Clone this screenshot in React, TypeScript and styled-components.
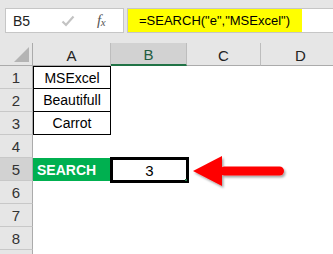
import { Fragment, FunctionComponent } from "react";
import styled, { createGlobalStyle } from "styled-components";

const GlobalStyle = createGlobalStyle`
  html, body {
    margin: 0;
    padding: 0;
    background: #ffffff;
  }
  body {
    font-family: "Liberation Sans", Arial, sans-serif;
  }
`;

const Sheet = styled.div`
  width: 333px;
  height: 254px;
  overflow: hidden;
  background: #ffffff;
  display: flex;
  flex-direction: column;
`;

const FormulaBar = styled.div`
  height: 43px;
  box-sizing: border-box;
  padding: 8px 0 10px 5px;
  background: #e6e6e6;
  display: flex;
  flex-direction: row;
  gap: 3px;
`;

const NameBox = styled.div`
  width: 119px;
  height: 25px;
  box-sizing: border-box;
  border: 1px solid #c6c6c6;
  background: #ffffff;
  display: flex;
  align-items: center;
  padding-left: 7px;
`;

const CellRef = styled.span`
  width: 48px;
  font-size: 14px;
  color: #222222;
`;

const CheckIcon = styled.svg`
  width: 14px;
  height: 12px;
`;

const FxLabel = styled.span`
  margin-left: 22px;
  font-family: "Liberation Serif", "Times New Roman", serif;
  font-style: italic;
  font-size: 15px;
  color: #555555;
  letter-spacing: -0.5px;

  & sub {
    font-size: 11px;
    vertical-align: -1px;
  }
`;

const FormulaInput = styled.div`
  flex: 1;
  height: 25px;
  box-sizing: border-box;
  border: 1px solid #c6c6c6;
  border-right: none;
  background: #ffffff;
  display: flex;
`;

const FormulaText = styled.div`
  width: 174px;
  height: 100%;
  background: #ffff00;
  box-sizing: border-box;
  padding-left: 11px;
  display: flex;
  align-items: center;
  font-size: 13px;
  color: #000000;
  white-space: nowrap;
`;

const Grid = styled.div`
  position: relative;
  display: grid;
  grid-template-columns: 33px 78px 76px 74px 80px;
  grid-auto-rows: 23px;
`;

const Corner = styled.div`
  background: #e6e6e6;
  border-right: 1px solid #ababab;
  border-bottom: 1px solid #ababab;
  box-sizing: border-box;
  position: relative;

  &::after {
    content: "";
    position: absolute;
    right: 3px;
    bottom: 3px;
    width: 0;
    height: 0;
    border-left: 15px solid transparent;
    border-bottom: 15px solid #b4b4b4;
  }
`;

const ColHeader = styled.div<{ $active?: boolean }>`
  background: ${(p) => (p.$active ? "#d2d2d2" : "#e6e6e6")};
  border-right: 1px solid #bdbdbd;
  border-bottom: ${(p) => (p.$active ? "2px solid #217346" : "1px solid #ababab")};
  box-sizing: border-box;
  display: flex;
  align-items: center;
  justify-content: center;
  padding-top: 2px;
  font-size: 15px;
  color: ${(p) => (p.$active ? "#1f5c40" : "#222222")};
`;

const RowHeader = styled.div<{ $active?: boolean }>`
  background: ${(p) => (p.$active ? "#d2d2d2" : "#e6e6e6")};
  border-right: 1px solid #ababab;
  border-bottom: 1px solid #c8c8c8;
  box-sizing: border-box;
  display: flex;
  align-items: center;
  justify-content: center;
  font-size: 15px;
  color: #333333;
`;

const Cell = styled.div`
  box-sizing: border-box;
  background: #ffffff;
`;

const ValueCell = styled.div<{ $first?: boolean }>`
  box-sizing: border-box;
  border: 1px solid #000000;
  border-top: ${(p) => (p.$first ? "1px solid #000000" : "none")};
  display: flex;
  align-items: center;
  justify-content: center;
  font-size: 14px;
  color: #000000;
`;

const LabelCell = styled.div`
  box-sizing: border-box;
  background: #00b050;
  border-right: 1px solid #00803a;
  display: flex;
  align-items: center;
  padding-left: 4px;
  font-size: 14px;
  font-weight: bold;
  color: #ffffff;
`;

const SelectedCell = styled.div`
  position: relative;
  z-index: 1;
  box-sizing: border-box;
  margin: -1px -2px -2px -1px;
  border: 3px solid #000000;
  background: #ffffff;
  display: flex;
  align-items: center;
  justify-content: center;
  font-size: 15px;
  color: #000000;

  &::after {
    content: "";
    position: absolute;
    right: -1px;
    bottom: -1px;
    width: 2px;
    height: 2px;
    background: #217346;
  }
`;

const Arrow = styled.svg`
  position: absolute;
  left: 191px;
  top: 111px;
  width: 98px;
  height: 34px;
  overflow: visible;
`;

const words = ["MSExcel", "Beautifull", "Carrot"];

const App: FunctionComponent = () => {
  return (
    <>
      <GlobalStyle />
      <Sheet>
        <FormulaBar>
          <NameBox>
            <CellRef>B5</CellRef>
            <CheckIcon viewBox="0 0 14 12">
              <polyline
                points="1.5,6.5 5,10 12.5,1.5"
                fill="none"
                stroke="#c3c3c3"
                strokeWidth="2.2"
              />
            </CheckIcon>
            <FxLabel>
              f<sub>x</sub>
            </FxLabel>
          </NameBox>
          <FormulaInput>
            <FormulaText>=SEARCH("e","MSExcel")</FormulaText>
          </FormulaInput>
        </FormulaBar>

        <Grid>
          <Corner />
          <ColHeader>A</ColHeader>
          <ColHeader $active>B</ColHeader>
          <ColHeader>C</ColHeader>
          <ColHeader>D</ColHeader>

          {words.map((w, i) => (
            <Fragment key={w}>
              <RowHeader>{i + 1}</RowHeader>
              <ValueCell $first={i === 0}>{w}</ValueCell>
              <Cell />
              <Cell />
              <Cell />
            </Fragment>
          ))}

          <RowHeader>4</RowHeader>
          <Cell />
          <Cell />
          <Cell />
          <Cell />

          <RowHeader $active>5</RowHeader>
          <LabelCell>SEARCH</LabelCell>
          <SelectedCell>3</SelectedCell>
          <Cell />
          <Cell />

          {[6, 7, 8].map((n) => (
            <Fragment key={n}>
              <RowHeader>{n}</RowHeader>
              <Cell />
              <Cell />
              <Cell />
              <Cell />
            </Fragment>
          ))}

          {/* row 9 is only a sliver at the bottom edge */}
          <RowHeader />
          <Cell />
          <Cell />
          <Cell />
          <Cell />

          <Arrow viewBox="0 0 98 34">
            <defs>
              <filter id="arrowShadow" x="-10%" y="-20%" width="130%" height="160%">
                <feDropShadow dx="1.5" dy="2" stdDeviation="1.2" floodColor="#000000" floodOpacity="0.35" />
              </filter>
            </defs>
            <g filter="url(#arrowShadow)" fill="#ff0000">
              <polygon points="2,17 31,2 31,32" />
              <rect x="29" y="12.5" width="64" height="9" rx="4.5" />
            </g>
          </Arrow>
        </Grid>
      </Sheet>
    </>
  );
};

export default App;
